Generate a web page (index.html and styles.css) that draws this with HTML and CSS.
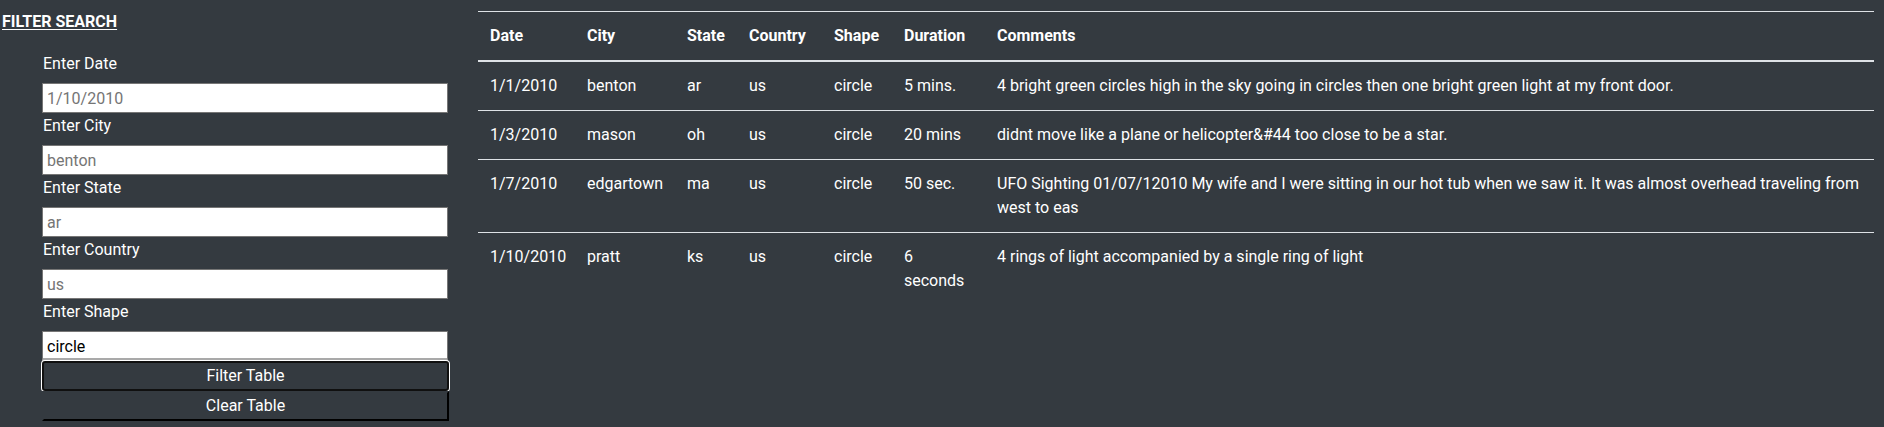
FILE: index.html
```html
<!DOCTYPE html>
<html lang="en">
<head>
<meta charset="utf-8">
<title>UFO Sightings</title>
<link rel="stylesheet" href="styles.css">
</head>
<body>
<div class="page">
  <aside class="sidebar">
    <h2 class="sidebar-title">FILTER SEARCH</h2>
    <form class="filters">
      <label class="filter-label" for="datetime">Enter Date</label>
      <input class="filter-input" id="datetime" type="text" placeholder="1/10/2010">
      <label class="filter-label" for="city">Enter City</label>
      <input class="filter-input" id="city" type="text" placeholder="benton">
      <label class="filter-label" for="state">Enter State</label>
      <input class="filter-input" id="state" type="text" placeholder="ar">
      <label class="filter-label" for="country">Enter Country</label>
      <input class="filter-input" id="country" type="text" placeholder="us">
      <label class="filter-label" for="shape">Enter Shape</label>
      <input class="filter-input filter-input--active" id="shape" type="text" value="circle">
      <button class="filter-btn filter-btn--focused" type="button">Filter Table</button>
      <button class="filter-btn" type="button">Clear Table</button>
    </form>
  </aside>
  <main class="main">
    <table class="ufo-table">
      <colgroup>
        <col class="col-date">
        <col class="col-city">
        <col class="col-state">
        <col class="col-country">
        <col class="col-shape">
        <col class="col-duration">
        <col class="col-comments">
      </colgroup>
      <thead>
        <tr>
          <th>Date</th>
          <th>City</th>
          <th>State</th>
          <th>Country</th>
          <th>Shape</th>
          <th>Duration</th>
          <th>Comments</th>
        </tr>
      </thead>
      <tbody>
        <tr>
          <td>1/1/2010</td>
          <td>benton</td>
          <td>ar</td>
          <td>us</td>
          <td>circle</td>
          <td>5 mins.</td>
          <td>4 bright green circles high in the sky going in circles then one bright green light at my front door.</td>
        </tr>
        <tr>
          <td>1/3/2010</td>
          <td>mason</td>
          <td>oh</td>
          <td>us</td>
          <td>circle</td>
          <td>20 mins</td>
          <td>didnt move like a plane or helicopter&amp;#44 too close to be a star.</td>
        </tr>
        <tr>
          <td>1/7/2010</td>
          <td>edgartown</td>
          <td>ma</td>
          <td>us</td>
          <td>circle</td>
          <td>50 sec.</td>
          <td>UFO Sighting 01/07/12010 My wife and I were sitting in our hot tub when we saw it. It was almost overhead traveling from west to eas</td>
        </tr>
        <tr>
          <td>1/10/2010</td>
          <td>pratt</td>
          <td>ks</td>
          <td>us</td>
          <td>circle</td>
          <td>6 seconds</td>
          <td>4 rings of light accompanied by a single ring of light</td>
        </tr>
      </tbody>
    </table>
  </main>
</div>
</body>
</html>
```

FILE: styles.css
```css
html, body {
  margin: 0;
  padding: 0;
  background: #343a40;
}

body {
  font-family: Roboto, "Noto Sans", "Liberation Sans", sans-serif;
  font-size: 16px;
  line-height: 24px;
  color: #ffffff;
}

.page {
  display: flex;
  padding: 0 10px 0 2px;
  height: 427px;
  box-sizing: border-box;
}

.sidebar {
  width: 476px;
  flex: none;
  padding-top: 10px;
  box-sizing: border-box;
}

.sidebar-title {
  margin: 0;
  font-size: 16px;
  line-height: 24px;
  font-weight: 700;
  text-decoration: underline;
  text-underline-offset: 2px;
}

.filters {
  display: flex;
  flex-direction: column;
  align-items: flex-start;
  margin-top: 17px;
  padding-left: 40px;
}

.filter-label {
  display: block;
  margin-bottom: 8px;
  padding-left: 1px;
  padding-top: 1px;
  line-height: 23px;
}

.filter-input {
  display: block;
  width: 406px;
  height: 30px;
  box-sizing: border-box;
  margin: 0;
  padding: 1px 4px 0;
  border: 1px solid #767676;
  background: #ffffff;
  color: #000000;
  font-family: inherit;
  font-size: 16px;
}

.filter-input::placeholder {
  color: #757575;
}

.filter-input--active {
  border-bottom: 3px solid #a9a9a9;
  padding-top: 3px;
}

.filter-btn {
  display: block;
  width: 407px;
  height: 30px;
  box-sizing: border-box;
  margin: 0;
  padding: 0;
  background: #343a40;
  color: #ffffff;
  font-family: inherit;
  font-size: 16px;
  line-height: 24px;
  border-style: solid;
  border-width: 2px;
  border-color: #343a40 #000000 #000000 #343a40;
}

.filter-btn--focused {
  border-color: #101010;
  border-radius: 3px;
  box-shadow: 0 0 0 1px #ffffff;
}

.main {
  flex: 1;
  padding-top: 11px;
}

.ufo-table {
  width: 100%;
  table-layout: fixed;
  border-collapse: collapse;
  color: #ffffff;
}

.col-date { width: 97px; }
.col-city { width: 100px; }
.col-state { width: 62px; }
.col-country { width: 85px; }
.col-shape { width: 70px; }
.col-duration { width: 93px; }

.ufo-table th,
.ufo-table td {
  padding: 12px;
  text-align: left;
  vertical-align: top;
  border-top: 1px solid #dee2e6;
  line-height: 24px;
}

.ufo-table th {
  font-weight: 700;
  border-bottom: 2px solid #dee2e6;
}
```
